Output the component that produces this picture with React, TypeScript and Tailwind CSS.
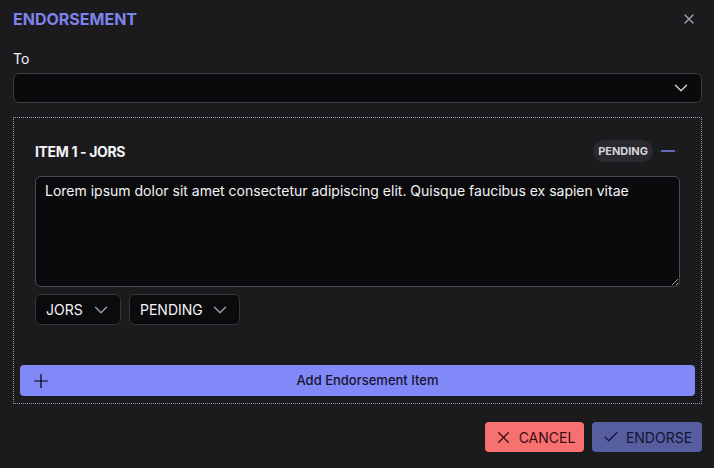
import { ChevronDown, X, Plus, Check, Minus } from 'lucide-react';

const font = { fontFamily: 'Inter, "Noto Sans", sans-serif' };

function MiniSelect({ value, width }: { value: string; width: string }) {
  return (
    <div className={`${width} h-[31px] flex items-center justify-between pl-[10px] pr-[8px] bg-[#0b0b0d] border border-[#34343a] rounded-md text-[14px] text-zinc-100`}>
      <span>{value}</span>
      <ChevronDown size={22} strokeWidth={1.5} className="text-zinc-400" />
    </div>
  );
}

export default function App() {
  return (
    <div style={font} className="w-[714px] h-[468px] bg-[#1b1b1e] pl-[13px] pr-[12px] pt-[7px] text-zinc-100">
      <div className="flex items-center justify-between h-[24px]">
        <h2 className="text-[16px] font-bold text-[#7c84ea] leading-6">ENDORSEMENT</h2>
        <X size={16} className="text-zinc-400 mr-[5px]" />
      </div>

      <div className="mt-[18px] text-[14px] leading-5">To</div>
      <div className="mt-[4px] h-[30px] flex items-center justify-end pr-[9px] bg-[#0a0a0c] border border-[#3c3c42] rounded-md">
        <ChevronDown size={22} strokeWidth={1.5} className="text-zinc-300" />
      </div>

      <div className="mt-[14px] border border-dotted border-zinc-400 px-[6px] pt-[7px] pb-[7px]">
        <div className="px-[15px] pt-[15px]">
          <div className="flex items-center justify-between h-[22px]">
            <span className="text-[14px] font-bold tracking-tight text-zinc-100">ITEM 1 - JORS</span>
            <div className="flex items-center gap-[4px] pr-[1px]">
              <span className="h-[22px] px-[5px] flex items-center rounded-full bg-[#2a2a2e] text-[11px] font-bold text-zinc-300">PENDING</span>
              <Minus size={22} strokeWidth={1.5} className="text-[#7c84ea]" />
            </div>
          </div>
          <textarea
            className="mt-[14px] block w-full h-[111px] bg-[#0a0a0c] border border-[#4a4a52] rounded-md px-[9px] py-[4px] text-[14px] leading-5 text-zinc-100 outline-none"
            defaultValue="Lorem ipsum dolor sit amet consectetur adipiscing elit. Quisque faucibus ex sapien vitae"
          />
          <div className="mt-[7px] flex gap-[8px]">
            <MiniSelect value="JORS" width="w-[86px]" />
            <MiniSelect value="PENDING" width="w-[111px]" />
          </div>
        </div>
        <button className="mt-[40px] w-full h-[31px] relative flex items-center justify-center bg-[#8188f7] rounded text-[13px] font-medium text-[#15152e]">
          <Plus size={22} strokeWidth={1.3} className="absolute left-[10px] text-black" />
          <span className="pl-[20px]">Add Endorsement Item</span>
        </button>
      </div>

      <div className="mt-[18px] flex justify-end gap-[8px]">
        <button className="h-[30px] w-[99px] flex items-center justify-center gap-[6px] rounded bg-[#f87171] text-[14px] text-[#3a0c0c]">
          <X size={19} strokeWidth={1.6} />
          CANCEL
        </button>
        <button className="h-[30px] w-[110px] flex items-center justify-center gap-[6px] rounded bg-[#575ea0] text-[14px] text-[#141433]">
          <Check size={18} strokeWidth={1.6} />
          ENDORSE
        </button>
      </div>
    </div>
  );
}
